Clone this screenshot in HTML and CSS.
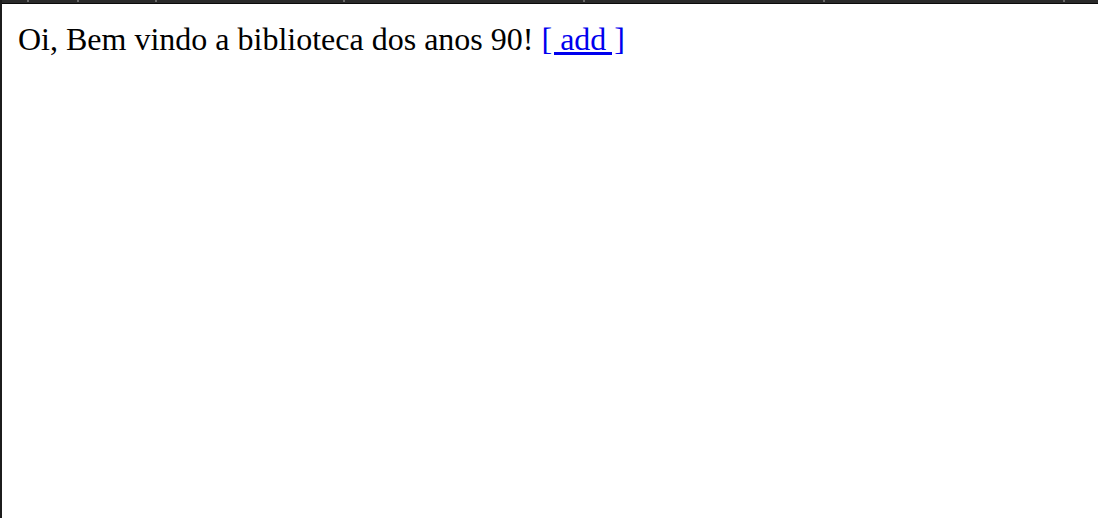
FILE: index.html
```html
<!DOCTYPE html>
<html>
<head>
<meta charset="utf-8">
<link rel="stylesheet" href="styles.css">
</head>
<body>
<div class="frame">
  <div class="topbar">
    <span class="tick t1"></span>
    <span class="tick t2"></span>
    <span class="tick t3"></span>
    <span class="tick t4"></span>
    <span class="tick t5"></span>
    <span class="tick t6"></span>
    <span class="tick t7"></span>
  </div>
  <div class="content">
    <p class="greeting">Oi, Bem vindo a biblioteca dos anos 90! <a href="#" class="add">[ add ]</a></p>
  </div>
</div>
</body>
</html>
```
FILE: styles.css
```css
html, body {
  margin: 0;
  padding: 0;
  background: #ffffff;
  height: 100%;
}
.frame {
  height: 100%;
  border-left: 2px solid #1c1c1c;
  display: flex;
  flex-direction: column;
}
.topbar {
  position: relative;
  height: 3px;
  background: #2a2a2a;
  border-bottom: 1px solid #0a0a0a;
}
.tick {
  position: absolute;
  top: 0;
  width: 2px;
  height: 2px;
  background: #6a6a6a;
}
.t1 { left: 25px; }
.t2 { left: 75px; }
.t3 { left: 153px; }
.t4 { left: 341px; }
.t5 { left: 581px; }
.t6 { left: 821px; }
.t7 { left: 1061px; }
.content {
  padding: 17px 16px 0;
}
.greeting {
  margin: 0;
  font-family: "Liberation Serif", "Times New Roman", serif;
  font-size: 32px;
  color: #000;
}
.add {
  color: #0000ee;
  text-decoration: underline;
}
```
